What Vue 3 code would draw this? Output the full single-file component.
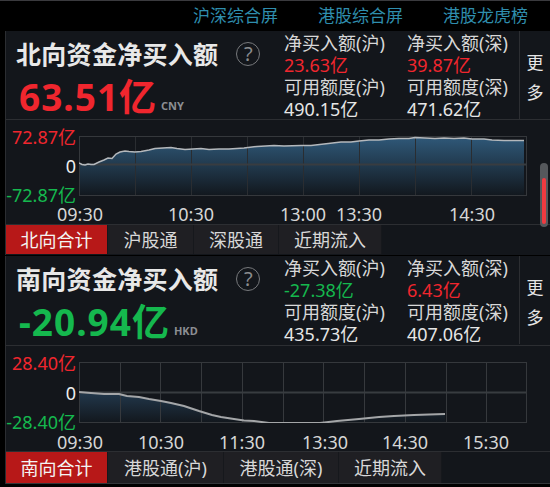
<template>
  <div class="page">
    <!-- 顶部导航 -->
    <nav class="top-nav">
      <a v-for="item in topLinks" :key="item" class="top-link">{{ item }}</a>
    </nav>

    <section v-for="panel in panels" :key="panel.id" class="panel" :class="panel.id">
      <!-- 汇总 -->
      <div class="summary">
        <div class="headline">
          <div class="title-row">
            <h2 class="title">{{ panel.title }}</h2>
            <span class="help">?</span>
          </div>
          <div class="total" :class="panel.totalColor">
            <span class="total-num">{{ panel.total }}</span>
            <span class="unit">{{ panel.currency }}</span>
          </div>
        </div>
        <div class="stats">
          <div v-for="stat in panel.stats" :key="stat.label" class="stat">
            <div class="stat-label">{{ stat.label }}</div>
            <div class="stat-value" :class="stat.color">{{ stat.value }}</div>
          </div>
        </div>
        <div class="more"><span>更</span><span>多</span></div>
      </div>

      <!-- 分时图 -->
      <div class="chart">
        <div class="y-axis">
          <span class="red">{{ panel.range }}</span>
          <span class="zero">0</span>
          <span class="green">-{{ panel.range }}</span>
        </div>
        <svg class="plot" :width="plotW" :height="panel.plotH" :viewBox="`0 0 ${plotW} ${panel.plotH}`">
          <defs>
            <linearGradient :id="`fill-${panel.id}`" x1="0" y1="0" x2="0" y2="1">
              <stop offset="0" :stop-color="panel.fillTop" />
              <stop offset="1" :stop-color="panel.fillBottom" />
            </linearGradient>
          </defs>
          <polygon :points="areaPoints(panel)" :fill="`url(#fill-${panel.id})`" />
          <line
            v-for="x in gridLines(panel)"
            :key="x"
            :x1="x" :x2="x" y1="0" :y2="panel.plotH"
            class="grid"
          />
          <line x1="0" :x2="plotW" :y1="panel.midY" :y2="panel.midY" class="grid mid" />
          <rect x="0.5" y="0.5" :width="plotW - 1" :height="panel.plotH - 1" class="frame" />
          <polyline :points="linePoints(panel)" class="trend" />
        </svg>
        <div class="x-axis">
          <span
            v-for="tick in panel.ticks"
            :key="tick.text"
            class="tick"
            :style="{ left: tick.x + 'px' }"
          >{{ tick.text }}</span>
        </div>
      </div>

      <!-- 标签页 -->
      <div class="tabs">
        <button
          v-for="(tab, i) in panel.tabs"
          :key="tab"
          class="tab"
          :class="{ active: i === 0 }"
        >{{ tab }}</button>
      </div>
    </section>

    <!-- 滚动条 -->
    <div class="scrollbar"><div class="scrollbar-fill"></div></div>
  </div>
</template>

<script setup>
const plotW = 448;

const topLinks = ["沪深综合屏", "港股综合屏", "港股龙虎榜"];

const panels = [
  {
    id: "north",
    title: "北向资金净买入额",
    total: "63.51亿",
    totalColor: "red",
    currency: "CNY",
    range: "72.87亿",
    plotH: 60,
    midY: 28.5,
    gridCount: 8,
    fillTop: "#2f5878",
    fillBottom: "#12171d",
    stats: [
      { label: "净买入额(沪)", value: "23.63亿", color: "red" },
      { label: "净买入额(深)", value: "39.87亿", color: "red" },
      { label: "可用额度(沪)", value: "490.15亿", color: "" },
      { label: "可用额度(深)", value: "471.62亿", color: "" },
    ],
    ticks: [
      { text: "09:30", x: 1 },
      { text: "10:30", x: 112 },
      { text: "13:00", x: 224 },
      { text: "13:30", x: 280 },
      { text: "14:30", x: 393 },
    ],
    tabs: ["北向合计", "沪股通", "深股通", "近期流入"],
    line: [
      [0, 27], [3, 28.5], [6, 29], [9, 28], [12, 28.5], [15, 28.5], [20, 26], [25, 24], [29, 22],
      [33, 22.5], [37, 18], [41, 16], [46, 15], [50, 15.5], [56, 16], [62, 15.5], [70, 14], [76, 12.5],
      [84, 12], [92, 11.5], [98, 12.5], [106, 13.5], [114, 13], [122, 12.5], [130, 13.5], [140, 13],
      [150, 13], [165, 12], [178, 10.5], [195, 9.5], [205, 10], [222, 9.5], [232, 9.5], [245, 8],
      [262, 6], [272, 6], [280, 5], [290, 4], [300, 4], [310, 3], [320, 2.5], [330, 2.5], [336, 1.5],
      [346, 2], [356, 2.5], [365, 2], [375, 2.5], [385, 2], [393, 3], [405, 3], [413, 4], [425, 4.5],
      [445, 4.5],
    ],
  },
  {
    id: "south",
    title: "南向资金净买入额",
    total: "-20.94亿",
    totalColor: "green",
    currency: "HKD",
    range: "28.40亿",
    plotH: 61,
    midY: 30.5,
    gridCount: 11,
    fillTop: "#22384c",
    fillBottom: "#12171d",
    stats: [
      { label: "净买入额(沪)", value: "-27.38亿", color: "green" },
      { label: "净买入额(深)", value: "6.43亿", color: "red" },
      { label: "可用额度(沪)", value: "435.73亿", color: "" },
      { label: "可用额度(深)", value: "407.06亿", color: "" },
    ],
    ticks: [
      { text: "09:30", x: 1 },
      { text: "10:30", x: 82 },
      { text: "11:30", x: 163 },
      { text: "13:30", x: 246 },
      { text: "14:30", x: 326 },
      { text: "15:30", x: 407 },
    ],
    tabs: ["南向合计", "港股通(沪)", "港股通(深)", "近期流入"],
    line: [
      [0, 30], [12, 31], [25, 32], [40, 32], [48, 34], [60, 35], [70, 37], [82, 39], [92, 41],
      [105, 44], [120, 49], [133, 53], [142, 55], [155, 57], [165, 58.5], [175, 59], [190, 61],
      [205, 61], [241, 61], [258, 59], [280, 57], [300, 55], [315, 54], [335, 53], [350, 52.5], [366, 52],
    ],
  },
];

const linePoints = (panel) => panel.line.map((p) => p.join(",")).join(" ");

// 折线下方的填充区域
const areaPoints = (panel) => {
  const last = panel.line[panel.line.length - 1];
  return `0,${panel.plotH} ${linePoints(panel)} ${last[0]},${panel.plotH}`;
};

const gridLines = (panel) => {
  const step = plotW / panel.gridCount;
  return Array.from({ length: panel.gridCount - 1 }, (_, i) => Math.round(step * (i + 1)) + 0.5);
};
</script>

<style>
html,
body {
  margin: 0;
  background: #000;
}
</style>

<style scoped>
.page {
  position: relative;
  width: 550px;
  height: 487px;
  overflow: hidden;
  background: #000;
  color: #e6e6e6;
  font-family: "Noto Sans", "Noto Sans CJK SC", sans-serif;
  border-top: 1px solid #3a3a3e;
  box-sizing: border-box;
}

.top-nav {
  display: flex;
  justify-content: flex-end;
  gap: 40px;
  height: 30px;
  padding-right: 22px;
  align-items: center;
  box-sizing: border-box;
}

.top-link {
  color: #2f8eae;
  font-size: 17px;
  line-height: 30px;
}

.panel {
  margin-left: 5px;
  background: #13161b;
  border-left: 1px solid #2b2d31;
}

.panel.north {
  height: 224px;
  margin-bottom: 1px;
}

.panel.south {
  height: 228px;
}

.summary {
  display: flex;
  height: 89px;
  border-bottom: 1px solid #2c2e32;
  box-sizing: border-box;
}

.south .summary {
  height: 90px;
}

.headline {
  width: 278px;
  padding-left: 10px;
  box-sizing: border-box;
}

.title-row {
  display: flex;
  align-items: center;
  height: 46px;
  box-sizing: border-box;
}

.title {
  margin: 0;
  font-size: 25px;
  line-height: 34px;
  font-weight: 700;
  letter-spacing: 0.3px;
  color: #e8e8e8;
}

.help {
  width: 22px;
  height: 22px;
  margin-left: 18px;
  border: 1.5px solid #77797c;
  border-radius: 50%;
  color: #8a8c8f;
  font-size: 20px;
  line-height: 22px;
  text-align: center;
}

.total {
  display: flex;
  align-items: flex-end;
  height: 40px;
  padding-left: 3px;
}

.total-num {
  font-size: 37px;
  font-weight: 700;
  line-height: 40px;
  letter-spacing: 1px;
}

.unit {
  margin-left: 4px;
  margin-bottom: 5px;
  font-size: 11px;
  font-weight: 700;
  line-height: 12px;
  color: #8c8e92;
}

.stats {
  display: grid;
  grid-template-columns: 123px 112px;
  width: 235px;
  align-content: start;
  padding-top: 1px;
}

.stat-label,
.stat-value {
  font-size: 18px;
  line-height: 22px;
  white-space: nowrap;
}

.stat-label {
  color: #d8d8d8;
}

.more {
  display: flex;
  flex-direction: column;
  align-items: center;
  justify-content: center;
  gap: 12px;
  width: 31px;
  height: 88px;
  padding-top: 6px;
  box-sizing: border-box;
  border-left: 1px solid #2c2e32;
  font-size: 17px;
  line-height: 18px;
}

.chart {
  display: grid;
  grid-template-columns: 73px 448px;
  grid-template-rows: auto auto;
  height: 104px;
  padding-top: 16px;
  box-sizing: border-box;
}

.south .chart {
  height: 105px;
}

.y-axis {
  display: flex;
  flex-direction: column;
  justify-content: space-between;
  align-items: flex-end;
  margin: -8px 0;
  padding-right: 3px;
  font-size: 18px;
  line-height: 18px;
  color: #eee;
}

.plot {
  display: block;
}

.grid {
  stroke: #2a2d31;
  stroke-width: 1;
}

.south .grid {
  stroke: #36393d;
}

.grid.mid {
  stroke: #383c40;
  stroke-width: 2;
}

.frame {
  fill: none;
  stroke: #35383c;
}

.trend {
  fill: none;
  stroke: #b4b8bc;
  stroke-width: 1.5;
}

.south .trend {
  stroke: #a4a6a8;
  stroke-width: 2;
}

.x-axis {
  grid-column: 2;
  position: relative;
  height: 28px;
}

.tick {
  position: absolute;
  top: 9px;
  transform: translateX(-50%);
  font-size: 18px;
  line-height: 18px;
  color: #d6d6d6;
}

.south .tick {
  top: 10px;
}

.tabs {
  display: flex;
  height: 30px;
  border-top: 1px solid #2c2e32;
  box-sizing: border-box;
}

.south .tabs {
  height: 33px;
  border-bottom: 1px solid #33363a;
}

.tab {
  width: 85px;
  padding: 0;
  border: 0;
  border-right: 1px solid #16181c;
  background: #1f1f23;
  color: #d8d8d8;
  font-family: inherit;
  font-size: 18px;
  line-height: 28px;
  white-space: nowrap;
}

.tab:nth-child(2) {
  width: 86px;
}

.tab:first-child {
  width: 102px;
}

.tab:last-child {
  width: 103px;
}

.south .tab {
  width: 115px;
}

.south .tab:nth-child(2) {
  width: 116px;
}

.south .tab:first-child {
  width: 102px;
}

.south .tab:last-child {
  width: 103px;
}

.tab.active {
  background: #b71818;
  color: #f4f4f4;
}

.red {
  color: #f0262e;
}

.green {
  color: #15b84e;
}

.scrollbar {
  position: absolute;
  top: 162px;
  left: 540px;
  width: 8px;
  height: 64px;
  padding-top: 15px;
  border-radius: 4px;
  background: #55585c;
  box-sizing: border-box;
}

.scrollbar-fill {
  width: 4px;
  height: 46px;
  margin: 0 auto;
  border-radius: 2px;
  background: #ee3a40;
}
</style>
